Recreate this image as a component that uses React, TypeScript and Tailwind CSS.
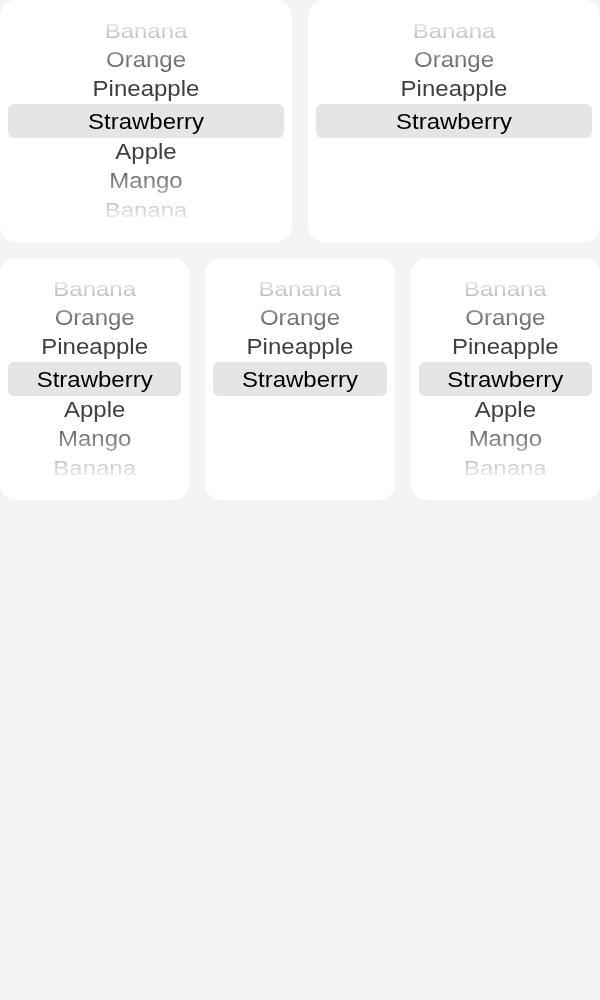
import React from "react";

type Row = { label: string; h: string; s: string; selected?: boolean };

const TOP: Row[] = [
  { label: "Banana", h: "h-[29px]", s: "scale-y-[0.84]" },
  { label: "Orange", h: "h-[29px]", s: "scale-y-[0.9]" },
  { label: "Pineapple", h: "h-[30px]", s: "scale-y-[0.93]" },
];
const CENTER: Row = { label: "Strawberry", h: "h-[34px]", s: "scale-y-[0.95]", selected: true };
const BOTTOM: Row[] = [
  { label: "Apple", h: "h-[28px]", s: "scale-y-[0.9]" },
  { label: "Mango", h: "h-[29px]", s: "scale-y-[0.9]" },
  { label: "Banana", h: "h-[29px]", s: "scale-y-[0.84]" },
];

function Picker({ loop }: { loop: boolean }) {
  const rows = loop ? [...TOP, CENTER, ...BOTTOM] : [...TOP, CENTER];
  return (
    <div className="bg-white rounded-2xl h-[242px] px-2 pt-4 overflow-hidden">
      <div className="flex flex-col h-[208px] [mask-image:linear-gradient(to_bottom,transparent_0%,black_31%,black_69%,transparent_100%)]">
        {rows.map((r, i) => (
          <div
            key={i}
            className={`${r.h} flex items-center justify-center shrink-0 ${
              r.selected ? "bg-[#e5e5e5] rounded-md text-black" : "text-[#3f3f3f]"
            }`}
          >
            <span className={`block ${r.s} text-[24px] leading-[28px] whitespace-nowrap`}>{r.label}</span>
          </div>
        ))}
      </div>
    </div>
  );
}

export default function App() {
  return (
    <div
      className="min-h-screen w-full bg-[#f4f4f4] flex flex-col gap-4"
      style={{ fontFamily: '"Liberation Sans", Arial, Helvetica, sans-serif' }}
    >
      <div className="grid grid-cols-2 gap-4">
        <Picker loop />
        <Picker loop={false} />
      </div>
      <div className="grid grid-cols-3 gap-4">
        <Picker loop />
        <Picker loop={false} />
        <Picker loop />
      </div>
    </div>
  );
}
